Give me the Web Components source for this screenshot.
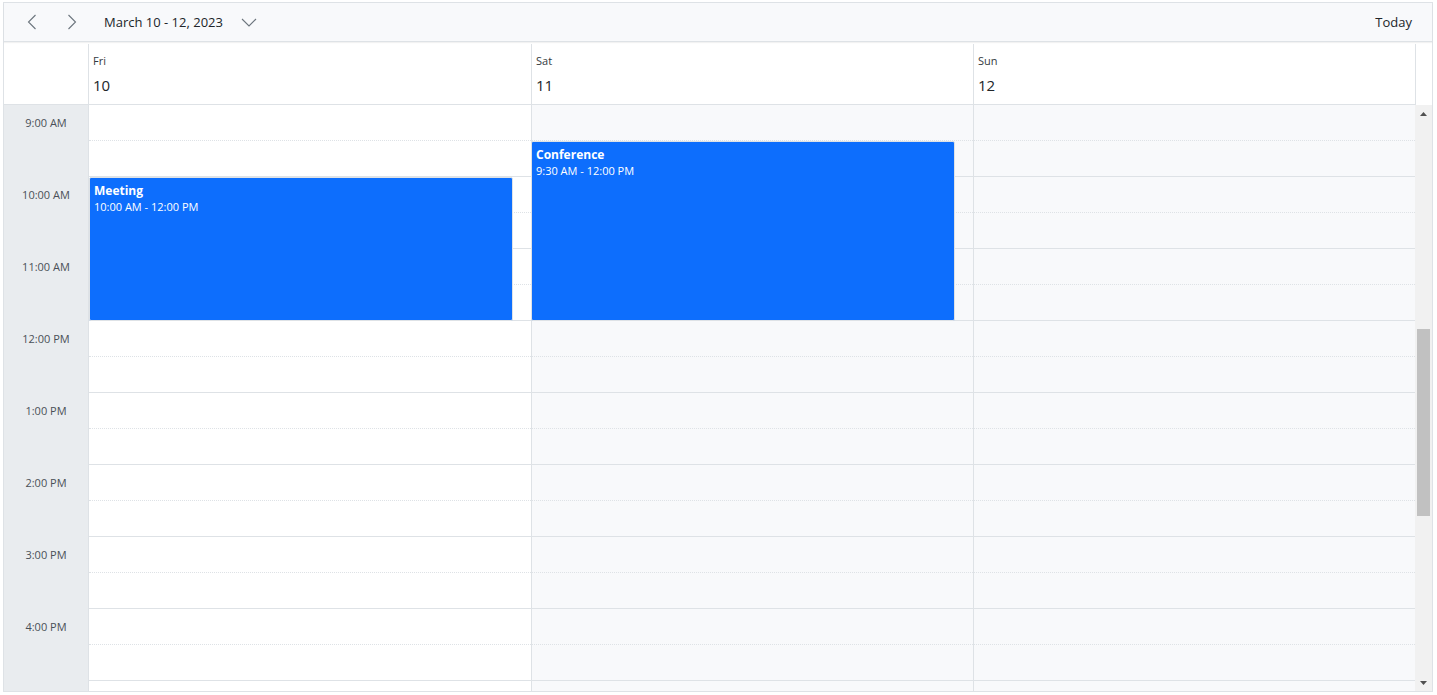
<!DOCTYPE html>
<html lang="en">
<head>
<meta charset="utf-8">
<meta name="viewport" content="width=device-width, initial-scale=1">
<title>Schedule</title>
<style>
  body {
    --border: #dee2e6;
    --light: #f8f9fb;
    --muted: #e9ecef;
    --primary: #0d6efd;
    --slot: 36px;
    --time-width: 85px;
    --bar-width: 17px;
    margin: 0;
    padding: 2px 4px 3px 3px;
    box-sizing: border-box;
    height: 100vh;
    background: #fff;
    color: #212529;
    font-family: "Open Sans", "Noto Sans", sans-serif;
    font-size: 13px;
  }
</style>
</head>
<body>
<schedule-view>
  <schedule-toolbar slot="toolbar" range="March 10 - 12, 2023"></schedule-toolbar>
  <day-header slot="header" day="Fri" date="10"></day-header>
  <day-header slot="header" day="Sat" date="11"></day-header>
  <day-header slot="header" day="Sun" date="12"></day-header>
  <time-column slot="times" from="9" to="16"></time-column>
  <day-column slot="days" slots="17" work>
    <schedule-event name="Meeting" time="10:00 AM - 12:00 PM" start="2" length="4"></schedule-event>
  </day-column>
  <day-column slot="days" slots="17">
    <schedule-event name="Conference" time="9:30 AM - 12:00 PM" start="1" length="5"></schedule-event>
  </day-column>
  <day-column slot="days" slots="17"></day-column>
  <scroll-bar slot="bar"></scroll-bar>
</schedule-view>

<script>
/**
 * Previous / next arrows, the date range drop-down and the Today button
 */
class ScheduleToolbar extends HTMLElement {
  constructor() {
    super();
    this._shadowRoot = this.attachShadow({ mode: 'open' });
  }

  connectedCallback() {
    this._shadowRoot.innerHTML = `
    <style>
      :host {
        display: flex;
        align-items: center;
        height: 38px;
        padding: 0 12px 0 8px;
        background: var(--light);
        border-bottom: 1px solid var(--border);
        box-shadow: 0 1px 1px rgba(0, 0, 0, .05);
      }
      button {
        display: flex;
        align-items: center;
        justify-content: center;
        height: 32px;
        margin: 0;
        padding: 0 8px;
        border: 0;
        background: none;
        color: inherit;
        font: inherit;
        white-space: nowrap;
        cursor: pointer;
      }
      .arrow { width: 40px; }
      .range { gap: 18px; padding: 0 12px; }
      .today { margin-left: auto; }
      svg {
        display: block;
        fill: none;
        stroke: #6c757d;
        stroke-width: 1.1;
      }
    </style>
    <button class="arrow" aria-label="Previous">
      <svg width="10" height="16" viewBox="0 0 10 16"><path d="M8.5 1 1.5 8l7 7"/></svg>
    </button>
    <button class="arrow" aria-label="Next">
      <svg width="10" height="16" viewBox="0 0 10 16"><path d="m1.5 1 7 7-7 7"/></svg>
    </button>
    <button class="range" aria-haspopup="true">
      <span>${this.getAttribute('range')}</span>
      <svg width="16" height="10" viewBox="0 0 16 10"><path d="m1 2 7 7 7-7"/></svg>
    </button>
    <button class="today">Today</button>
    `;
  }
}

// Name and number of one day, above its column
class DayHeader extends HTMLElement {
  constructor() {
    super();
    this._shadowRoot = this.attachShadow({ mode: 'open' });
  }

  connectedCallback() {
    this._shadowRoot.innerHTML = `
    <style>
      :host {
        display: flex;
        flex-direction: column;
        box-sizing: border-box;
        gap: 4px;
        padding: 8px 4px;
        border-left: 1px solid var(--border);
      }
      :host(:first-of-type) { border-left: 0; }
      .day {
        color: #343a40;
        font-size: 11px;
        line-height: 18px;
      }
      .date {
        font-size: 15px;
        line-height: 22px;
      }
    </style>
    <span class="day">${this.getAttribute('day')}</span>
    <span class="date">${this.getAttribute('date')}</span>
    `;
  }
}

/**
 * Hour labels on the left, from and to are hours of the day
 */
class TimeColumn extends HTMLElement {
  constructor() {
    super();
    this._shadowRoot = this.attachShadow({ mode: 'open' });
  }

  connectedCallback() {
    const from = Number(this.getAttribute('from'));
    const to = Number(this.getAttribute('to'));
    let labels = '';
    for (let hour = from; hour <= to; hour++) {
      labels += `<div>${hour % 12 || 12}:00 ${hour < 12 ? 'AM' : 'PM'}</div>`;
    }
    this._shadowRoot.innerHTML = `
    <style>
      :host {
        display: block;
        flex: none;
        box-sizing: border-box;
        width: var(--time-width);
        border-right: 1px solid var(--border);
        background: var(--muted);
        color: #495057;
        font-size: 11px;
        text-align: center;
      }
      div {
        height: calc(var(--slot) * 2);
        line-height: var(--slot);
      }
    </style>
    ${labels}
    `;
  }
}

// One day of half hour slots, events are passed in as children
class DayColumn extends HTMLElement {
  constructor() {
    super();
    this._shadowRoot = this.attachShadow({ mode: 'open' });
  }

  connectedCallback() {
    const slots = Number(this.getAttribute('slots'));
    this._shadowRoot.innerHTML = `
    <style>
      :host {
        display: block;
        position: relative;
        flex: 1 1 0;
      }
      .slot {
        box-sizing: border-box;
        height: var(--slot);
        border-left: 1px solid var(--border);
        border-bottom: 1px dotted var(--border);
        background: var(--light);
      }
      .slot:nth-of-type(even) { border-bottom-style: solid; }
      :host([work]) .slot { border-left: 0; background: #fff; }
    </style>
    ${'<div class="slot"></div>'.repeat(slots)}
    <slot></slot>
    `;
  }
}

/**
 * Appointment box laid over the slots
 * start and length are counted in half hour slots
 */
class ScheduleEvent extends HTMLElement {
  constructor() {
    super();
    this._shadowRoot = this.attachShadow({ mode: 'open' });
  }

  connectedCallback() {
    this._shadowRoot.innerHTML = `
    <style>
      :host {
        display: block;
        position: absolute;
        top: calc(var(--slot) * ${this.getAttribute('start')});
        left: 0;
        box-sizing: border-box;
        width: 96%;
        height: calc(var(--slot) * ${this.getAttribute('length')});
        padding: 4px;
        border: 1px solid var(--border);
        border-radius: 2px;
        background: var(--primary);
        color: #fff;
        overflow: hidden;
      }
      .name {
        font-size: 12px;
        font-weight: 700;
        line-height: 17px;
      }
      .time {
        font-size: 11px;
        line-height: 16px;
      }
    </style>
    <div class="name">${this.getAttribute('name')}</div>
    <div class="time">${this.getAttribute('time')}</div>
    `;
  }
}

class ScrollBar extends HTMLElement {
  constructor() {
    super();
    this._shadowRoot = this.attachShadow({ mode: 'open' });
  }

  connectedCallback() {
    this._shadowRoot.innerHTML = `
    <style>
      :host {
        display: flex;
        flex: none;
        flex-direction: column;
        width: var(--bar-width);
        background: #f1f1f1;
      }
      button {
        display: flex;
        align-items: center;
        justify-content: center;
        height: 17px;
        margin: 0;
        padding: 0;
        border: 0;
        background: none;
      }
      svg { fill: #505050; }
      .track {
        display: flex;
        flex: 1;
        flex-direction: column;
        padding: 0 2px;
      }
      .before { flex: 207; }
      .thumb { flex: 187; background: #c1c1c1; }
      .after { flex: 158; }
    </style>
    <button aria-label="Scroll up"><svg width="7" height="4" viewBox="0 0 7 4"><path d="M0 4 3.5 0 7 4z"/></svg></button>
    <div class="track">
      <div class="before"></div>
      <div class="thumb"></div>
      <div class="after"></div>
    </div>
    <button aria-label="Scroll down"><svg width="7" height="4" viewBox="0 0 7 4"><path d="M0 0h7L3.5 4z"/></svg></button>
    `;
  }
}

// Frame of the whole schedule, puts the parts in their rows
class ScheduleView extends HTMLElement {
  constructor() {
    super();
    this._shadowRoot = this.attachShadow({ mode: 'open' });
  }

  connectedCallback() {
    this._shadowRoot.innerHTML = `
    <style>
      :host {
        display: flex;
        flex-direction: column;
        box-sizing: border-box;
        height: 100%;
        border: 1px solid var(--border);
      }
      .head {
        display: flex;
        flex: none;
        padding-top: 2px;
      }
      .corner, .days-head { border-bottom: 1px solid var(--border); }
      .corner {
        box-sizing: border-box;
        width: var(--time-width);
        border-right: 1px solid var(--border);
      }
      .days-head {
        display: grid;
        flex: 1;
        grid-auto-flow: column;
        grid-auto-columns: 1fr;
      }
      .end {
        box-sizing: border-box;
        width: var(--bar-width);
        border-left: 1px solid var(--border);
      }
      .body {
        display: flex;
        flex: 1;
        min-height: 0;
        overflow: hidden;
      }
      .grid {
        display: flex;
        flex: 1;
        overflow: hidden;
      }
    </style>
    <slot name="toolbar"></slot>
    <div class="head">
      <div class="corner"></div>
      <div class="days-head"><slot name="header"></slot></div>
      <div class="end"></div>
    </div>
    <div class="body">
      <slot name="times"></slot>
      <div class="grid"><slot name="days"></slot></div>
      <slot name="bar"></slot>
    </div>
    `;
  }
}

customElements.define('schedule-toolbar', ScheduleToolbar);
customElements.define('day-header', DayHeader);
customElements.define('time-column', TimeColumn);
customElements.define('day-column', DayColumn);
customElements.define('schedule-event', ScheduleEvent);
customElements.define('scroll-bar', ScrollBar);
customElements.define('schedule-view', ScheduleView);
</script>
</body>
</html>
